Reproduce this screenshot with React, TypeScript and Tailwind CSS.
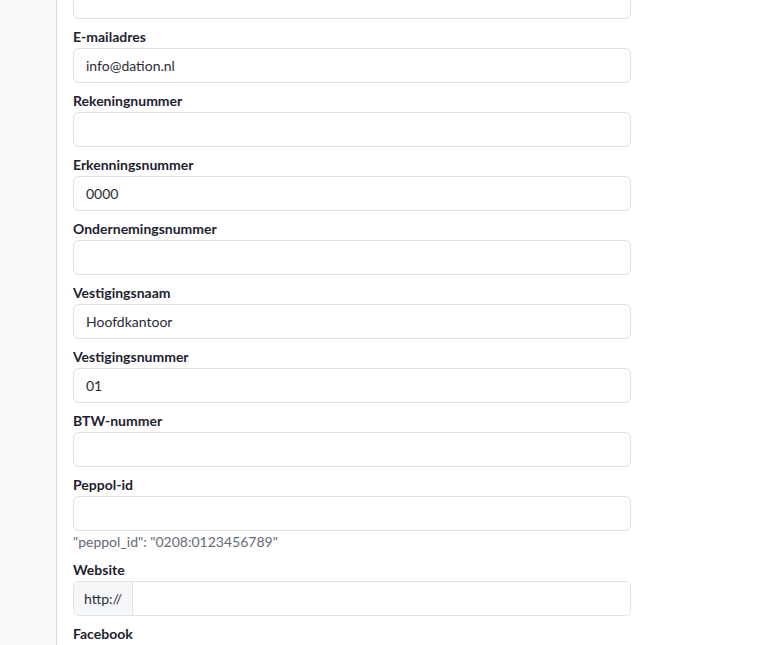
import React from 'react'

type Field = { label: string; value?: string; help?: string; addon?: string }

const FIELDS: Field[] = [
  { label: 'E-mailadres', value: 'info@dation.nl' },
  { label: 'Rekeningnummer' },
  { label: 'Erkenningsnummer', value: '0000' },
  { label: 'Ondernemingsnummer' },
  { label: 'Vestigingsnaam', value: 'Hoofdkantoor' },
  { label: 'Vestigingsnummer', value: '01' },
  { label: 'BTW-nummer' },
  { label: 'Peppol-id', help: '"peppol_id": "0208:0123456789"' },
  { label: 'Website', addon: 'http://' },
  { label: 'Facebook' },
]

function FormRow({ field }: { field: Field }) {
  return (
    <div className="mt-2">
      <label className="block text-[14px] leading-[19px] font-bold text-[#1e2230] mb-[2px]">{field.label}</label>
      {field.addon ? (
        <div className="flex h-[35px] rounded-md border border-[#dde3ea] overflow-hidden">
          <span className="w-[59px] flex items-center justify-center bg-[#f6f7f9] border-r border-[#dde3ea] text-[14px] text-[#2a2d36]">
            {field.addon}
          </span>
          <input className="flex-1 px-3 text-[14px] outline-none bg-white" defaultValue="" />
        </div>
      ) : (
        <input
          className="block w-full h-[35px] rounded-md border border-[#dde3ea] px-3 text-[14px] text-[#2a2d36] outline-none bg-white"
          defaultValue={field.value ?? ''}
        />
      )}
      {field.help && <p className="text-[14px] leading-[21px] text-[#666a73]">{field.help}</p>}
    </div>
  )
}

export default function App() {
  return (
    <div className="flex h-[645px] overflow-hidden bg-white" style={{ fontFamily: 'Lato, "Open Sans", sans-serif' }}>
      {/* Sidebar strip */}
      <div className="w-[57px] shrink-0 bg-[#faf9fc] border-r border-[#d9d9dd]" />

      <div className="w-[558px] ml-4 -mt-[24px]">
        {/* previous field, scrolled mostly out of view */}
        <div className="mt-2">
          <input className="block w-full h-[35px] rounded-md border border-[#dde3ea] px-3 text-[14px] outline-none bg-white" defaultValue="" />
        </div>
        {FIELDS.map(f => (
          <FormRow key={f.label} field={f} />
        ))}
      </div>
    </div>
  )
}
